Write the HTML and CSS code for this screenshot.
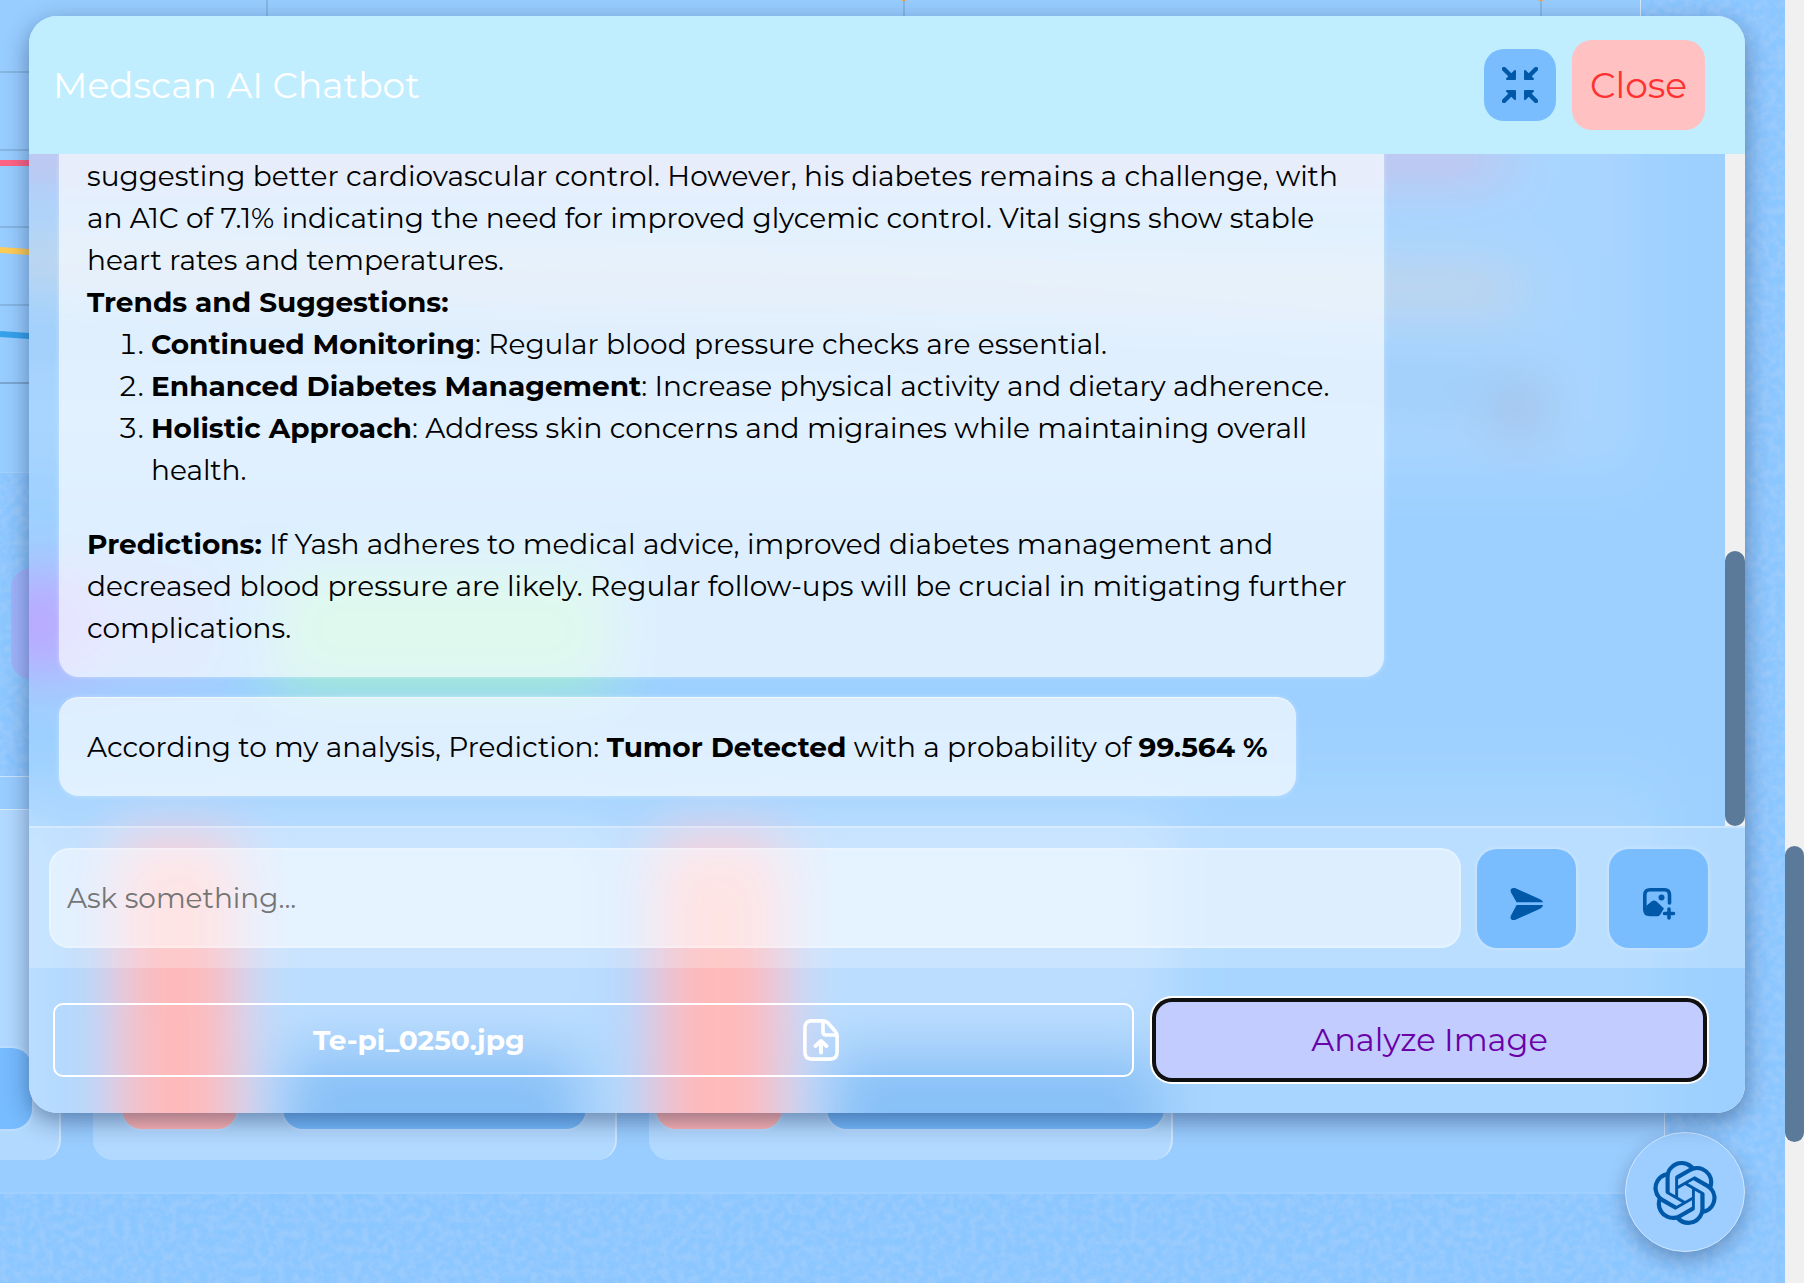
FILE: index.html
```html
<!DOCTYPE html>
<html lang="en">
<head>
    <meta charset="UTF-8">
    <meta name="viewport" content="width=device-width, initial-scale=1.0">
    <title>Medscan AI Chatbot</title>
    <link rel="stylesheet" href="styles.css">
</head>
<body>
    <svg class="grain" width="1785" height="1283">
        <filter id="noise" x="0" y="0" width="100%" height="100%">
            <feTurbulence type="fractalNoise" baseFrequency="0.13" numOctaves="3" seed="4"/>
            <feColorMatrix values="0 0 0 0 0.47  0 0 0 0 0.66  0 0 0 0 0.97  2.4 0 0 0 -0.8"/>
        </filter>
        <rect width="1785" height="1283" filter="url(#noise)"/>
    </svg>

    <!-- Dashboard behind the chat window -->
    <div class="page">
        <div class="chart-card">
            <svg width="1640" height="472" fill="none">
                <g stroke="#87b6e2" stroke-width="2">
                    <path d="M0 72H1540M0 150H1540M0 227H1540M0 305H1540M267 0V382M904 0V382M1541 0V382"/>
                    <path d="M0 383H1540" stroke="#7ba6cf"/>
                </g>
                <g stroke-width="6">
                    <path d="M0 163H60L1540 160" stroke="#ff6384"/>
                    <path d="M0 250L29 252L267 268L1540 295" stroke="#ffcd56"/>
                    <path d="M0 334L29 336L903 350L1540 415" stroke="#36a2eb"/>
                </g>
                <circle cx="904" cy="-4" r="5" fill="#ff9f40"/>
                <circle cx="1541" cy="-4" r="5" fill="#ff9f40"/>
            </svg>
        </div>
        <div class="actions">
            <div class="action purple"></div>
            <div class="action green"></div>
        </div>
        <div class="records">
            <div class="record"><span class="pill blue"></span></div>
            <div class="record">
                <span class="pill red"></span>
                <span class="pill blue"></span>
            </div>
            <div class="record third">
                <span class="pill red"></span>
                <span class="pill blue"></span>
            </div>
        </div>
    </div>

    <div class="page-scroll"><div class="page-thumb"></div></div>

    <!-- Chat window -->
    <div class="chatbot">
        <!-- frosted view of the dashboard -->
        <svg class="chat-glass" viewBox="29 16 1716 1097">
            <filter id="frost" filterUnits="userSpaceOnUse" x="-200" y="-200" width="2200" height="1600">
                <feGaussianBlur stdDeviation="28"/>
            </filter>
            <g filter="url(#frost)" fill="none">
                <rect x="-200" y="-200" width="2200" height="1600" fill="#8fcaff"/>
                <rect x="-200" y="-200" width="1840" height="673" fill="#9ccfff"/>
                <path d="M-200 158H1500" stroke="#ff6384" stroke-width="12"/>
                <path d="M-200 250L267 268L1520 290" stroke="#ffcd56" stroke-width="10"/>
                <path d="M-200 334L903 350L1540 395" stroke="#6fb4e8" stroke-width="12"/>
                <circle cx="1520" cy="412" r="18" fill="#a08fb0"/>
                <rect x="-200" y="572" width="300" height="104" fill="#b09eff"/>
                <rect x="90" y="568" width="120" height="111" fill="#a4bcff"/>
                <rect x="276" y="568" width="335" height="122" rx="20" fill="#93ebc4"/>
                <rect x="-200" y="776" width="1864" height="700" fill="#9acfff"/>
                <rect x="-200" y="809" width="261" height="600" fill="#b2d9ff"/>
                <rect x="93" y="809" width="524" height="600" fill="#b2d9ff"/>
                <rect x="649" y="809" width="524" height="600" fill="#b2d9ff"/>
                <rect x="118" y="842" width="119" height="600" rx="20" fill="#ffafaf"/>
                <rect x="656" y="842" width="126" height="600" rx="20" fill="#ffafaf"/>
                <rect x="283" y="1049" width="302" height="400" rx="20" fill="#76b8f6"/>
                <rect x="828" y="1049" width="336" height="400" rx="20" fill="#76b8f6"/>
            </g>
        </svg>

        <div class="chat-header">
            <h1>Medscan AI Chatbot</h1>
            <button class="resize-btn">
                <svg width="36" height="36" viewBox="0 0 36 36" fill="#0058a8" stroke="#0058a8" stroke-width="4.4" stroke-linecap="round" stroke-linejoin="round">
                    <path d="M2 2L9 9"/><path stroke-width="2" d="M13 4V12H5Z"/>
                    <path d="M34 2L27 9"/><path stroke-width="2" d="M23 4V12H31Z"/>
                    <path d="M2 34L9 27"/><path stroke-width="2" d="M13 32V24H5Z"/>
                    <path d="M34 34L27 27"/><path stroke-width="2" d="M23 32V24H31Z"/>
                </svg>
            </button>
            <button class="close-btn">Close</button>
        </div>

        <div class="chat-body">
            <div class="messages">
                <div class="message">
                    <p>suggesting better cardiovascular control. However, his diabetes remains a challenge, with an A1C of 7.1% indicating the need for improved glycemic control. Vital signs show stable heart rates and temperatures.</p>
                    <p><b>Trends and Suggestions:</b></p>
                    <ol>
                        <li><b>Continued Monitoring</b>: Regular blood pressure checks are essential.</li>
                        <li><b>Enhanced Diabetes Management</b>: Increase physical activity and dietary adherence.</li>
                        <li><b>Holistic Approach</b>: Address skin concerns and migraines while maintaining overall health.</li>
                    </ol>
                    <p><b>Predictions:</b> If Yash adheres to medical advice, improved diabetes management and decreased blood pressure are likely. Regular follow-ups will be crucial in mitigating further complications.</p>
                </div>
                <div class="message short">
                    <p>According to my analysis, Prediction: <b>Tumor Detected</b> with a probability of <b>99.564 %</b></p>
                </div>
            </div>
            <div class="chat-scroll"><div class="chat-thumb"></div></div>
        </div>

        <div class="chat-input">
            <input type="text" placeholder="Ask something...">
            <button class="send-btn">
                <svg width="34" height="34" viewBox="0 0 34 34" fill="#0058a8">
                    <path d="M1 5.5C-.4 2 2 0 5.5 1.3L30 12.3Q33 13.6 33 15.2H6.6Z"/>
                    <path d="M1 28.5C-.4 32 2 34 5.5 32.7L30 21.7Q33 20.3 33 18H6.6Z"/>
                </svg>
            </button>
            <button class="image-btn">
                <svg width="34" height="34" viewBox="0 0 34 34" fill="none" stroke="#0058a8" stroke-width="3.6" stroke-linecap="round">
                    <path d="M27.5 16V8Q27.5 2.8 22.5 2.8H8Q2.8 2.8 2.8 8V22.5Q2.8 27.5 8 27.5H16"/>
                    <path d="M4 19L9.5 14.5Q12 12.5 14.5 14.5L22 21.5L18 28H8Q3 28 3 23Z" fill="#0058a8" stroke="none"/>
                    <circle cx="19.5" cy="10.5" r="3" fill="#0058a8" stroke="none"/>
                    <path d="M27 22V31M22.5 26.5H31.5"/>
                </svg>
            </button>
        </div>

        <div class="chat-upload">
            <label class="file-box">
                <span class="file-name">Te-pi_0250.jpg</span>
                <svg width="36" height="42" viewBox="0 0 36 42" fill="none" stroke="#fff" stroke-width="3.6" stroke-linecap="round" stroke-linejoin="round">
                    <path d="M9 1.9H20Q23 1.9 25 4L32 12Q34.1 14.5 34.1 17V33Q34.1 40.1 27 40.1H9Q1.9 40.1 1.9 33V9Q1.9 1.9 9 1.9Z"/>
                    <path d="M20 2.5V13Q20 16 23 16H33.5"/>
                    <path d="M18 33.5V23M12.5 27L18 22L23.5 27" stroke-width="4"/>
                </svg>
            </label>
            <button class="analyze-btn">Analyze Image</button>
        </div>
    </div>

    <button class="chat-toggle">
        <svg width="64" height="64" viewBox="0 0 24 24" fill="#0058a8">
            <path d="M22.2819 9.8211a5.9847 5.9847 0 0 0-.5157-4.9108 6.0462 6.0462 0 0 0-6.5098-2.9A6.0651 6.0651 0 0 0 4.9807 4.1818a5.9847 5.9847 0 0 0-3.9977 2.9 6.0462 6.0462 0 0 0 .7427 7.0966 5.98 5.98 0 0 0 .511 4.9107 6.051 6.051 0 0 0 6.5146 2.9001A5.9847 5.9847 0 0 0 13.2599 24a6.0557 6.0557 0 0 0 5.7718-4.2058 5.9894 5.9894 0 0 0 3.9977-2.9001 6.0557 6.0557 0 0 0-.7475-7.0729zm-9.022 12.6081a4.4755 4.4755 0 0 1-2.8764-1.0408l.1419-.0804 4.7783-2.7582a.7948.7948 0 0 0 .3927-.6813v-6.7369l2.02 1.1686a.071.071 0 0 1 .038.052v5.5826a4.504 4.504 0 0 1-4.4945 4.4944zm-9.6607-4.1254a4.4708 4.4708 0 0 1-.5346-3.0137l.142.0852 4.783 2.7582a.7712.7712 0 0 0 .7806 0l5.8428-3.3685v2.3324a.0804.0804 0 0 1-.0332.0615L9.74 19.9502a4.4992 4.4992 0 0 1-6.1408-1.6464zM2.3408 7.8956a4.485 4.485 0 0 1 2.3655-1.9728V11.6a.7664.7664 0 0 0 .3879.6765l5.8144 3.3543-2.0201 1.1685a.0757.0757 0 0 1-.071 0l-4.8303-2.7865A4.504 4.504 0 0 1 2.3408 7.872zm16.5963 3.8558L13.1038 8.364 15.1192 7.2a.0757.0757 0 0 1 .071 0l4.8303 2.7913a4.4944 4.4944 0 0 1-.6765 8.1042v-5.6772a.79.79 0 0 0-.407-.667zm2.0107-3.0231l-.142-.0852-4.7735-2.7818a.7759.7759 0 0 0-.7854 0L9.409 9.2297V6.8974a.0662.0662 0 0 1 .0284-.0615l4.8303-2.7866a4.4992 4.4992 0 0 1 6.6802 4.66zM8.3065 12.863l-2.02-1.1638a.0804.0804 0 0 1-.038-.0567V6.0742a4.4992 4.4992 0 0 1 7.3757-3.4537l-.142.0805L8.704 5.459a.7948.7948 0 0 0-.3927.6813zm1.0976-2.3654l2.602-1.4998 2.6069 1.4998v2.9994l-2.5974 1.4997-2.6067-1.4997Z"/>
        </svg>
    </button>
</body>
</html>
```
FILE: styles.css
```css
* {
    box-sizing: border-box;
}
body {
    margin: 0;
    height: 1283px;
    overflow: hidden;
    position: relative;
    font-family: Montserrat, Inter, sans-serif;
    font-size: 28px;
    background-color: #8ac6ff;
}
button {
    border: none;
    padding: 0;
    font-family: inherit;
    border-radius: 20px;
    background-color: #79bdff;
    display: flex;
    align-items: center;
    justify-content: center;
}
.grain {
    position: absolute;
    left: 0;
    top: 0;
    opacity: 0.38;
}

/* Dashboard */
.page {
    position: relative;
    width: 1785px;
    height: 1283px;
    overflow: hidden;
}
.chart-card {
    width: 1641px;
    height: 473px;
    background-color: #98cdff;
    border-right: 1px solid #d4eaff;
    border-bottom: 1px solid #a4d2ff;
}
.chart-card svg {
    display: block;
}
.actions {
    display: flex;
    gap: 65px;
    margin: 95px 0 97px 11px;
}
.action {
    height: 111px;
    border-radius: 20px;
}
.action.purple {
    width: 200px;
    background-color: #a0b4fc;
}
.action.green {
    width: 335px;
    background-color: #93ebc4;
}
.records {
    display: flex;
    gap: 32px;
    width: 1665px;
    height: 418px;
    padding: 32px 0;
    background-color: #9acdff;
    border-top: 1px solid #cde6ff;
    border-right: 1px solid #cde6ff;
    border-bottom: 2px solid #a0d0ff;
}
.record {
    display: flex;
    align-items: flex-end;
    justify-content: space-between;
    width: 524px;
    padding: 0 29px 31px 29px;
    border-top: 1px solid #d8ecff;
    border-right: 2px solid #d0e8ff;
    border-radius: 0 0 20px 20px;
    background-color: #b2d9ff;
}
.record:first-child {
    width: 61px;
    padding: 0;
    padding-bottom: 31px;
    border-bottom-left-radius: 0;
}
.record.third {
    padding: 0 7px 31px 7px;
}
.pill {
    height: 81px;
    border-radius: 20px;
    box-shadow: 0 0 4px rgba(255, 255, 255, 0.4);
}
.pill.blue {
    width: 303px;
    background-color: #76bcff;
}
.record:first-child .pill {
    width: 32px;
    border-radius: 0 20px 20px 0;
}
.pill.red {
    width: 115px;
    height: 276px;
    background-color: #ffb4b4;
}
.third .pill.red {
    width: 126px;
}
.third .pill.blue {
    width: 337px;
}

/* Scrollbars */
.page-scroll {
    position: absolute;
    top: 0;
    right: 0;
    width: 19px;
    height: 1283px;
    padding-top: 846px;
    background-color: #f0f0f0;
}
.page-thumb {
    height: 296px;
    border-radius: 10px;
    background-color: #5b7a99;
}
.chat-scroll {
    width: 20px;
    padding-top: 397px;
    background-color: #f0f0f0;
}
.chat-thumb {
    height: 275px;
    border-radius: 10px;
    background-color: #5b7a99;
}

/* Chat window */
.chatbot {
    position: absolute;
    z-index: 1;
    left: 29px;
    top: 16px;
    width: 1716px;
    height: 1097px;
    display: flex;
    flex-direction: column;
    overflow: hidden;
    border-radius: 28px;
    box-shadow: 0 8px 24px rgba(0, 20, 60, 0.42);
}
.chat-glass {
    position: absolute;
    z-index: -1;
    left: 0;
    top: 0;
    width: 1716px;
    height: 1097px;
    opacity: 0.87;
}
.chatbot {
    background-color: #fff;
}
.chat-header {
    display: flex;
    align-items: center;
    height: 138px;
    padding: 0 40px 0 24px;
    background-color: #c0eeff;
}
.chat-header h1 {
    flex: 1;
    margin: 0;
    font-size: 36px;
    font-weight: 400;
    color: #fff;
}
.resize-btn {
    width: 72px;
    height: 72px;
    margin-right: 16px;
}
.close-btn {
    width: 133px;
    height: 90px;
    font-size: 36px;
    font-weight: 400;
    color: #ff3030;
    background-color: #ffc1c1;
}
.chat-body {
    display: flex;
    height: 672px;
}
.messages {
    flex: 1;
    display: flex;
    flex-direction: column;
    align-items: flex-start;
    justify-content: flex-end;
    gap: 20px;
    height: 672px;
    padding: 0 0 30px 30px;
    overflow: hidden;
}
.message {
    flex-shrink: 0;
    width: 1325px;
    padding: 28px;
    line-height: 42px;
    border-radius: 20px;
    background-color: rgba(255, 255, 255, 0.66);
    box-shadow: inset 0 1px 1px rgba(255, 255, 255, 0.6), 0 0 5px rgba(255, 255, 255, 0.35);
}
.message:first-child {
    padding-top: 2px;
    border-radius: 0 0 20px 20px;
}
.message.short {
    width: 1237px;
    padding-top: 29px;
}
.message p {
    margin: 0;
}
.message ol {
    margin: 0 0 32px;
    padding-left: 64px;
}
.message b {
    font-weight: 700;
}

/* Input row */
.chat-input {
    display: flex;
    align-items: center;
    height: 142px;
    padding: 0 37px 0 20px;
    border-top: 2px solid rgba(255, 255, 255, 0.3);
    background-color: rgba(255, 255, 255, 0.22);
}
.chat-input input {
    width: 1412px;
    height: 100px;
    padding: 0 16px;
    border: 2px solid rgba(255, 255, 255, 0.25);
    border-radius: 20px;
    font-family: inherit;
    font-size: 28px;
    background-color: rgba(255, 255, 255, 0.5);
}
.chat-input input::placeholder {
    color: #757575;
}
.send-btn, .image-btn {
    width: 99px;
    height: 99px;
    margin-left: 16px;
    padding-top: 11px;
    box-shadow: 0 0 5px rgba(255, 255, 255, 0.4);
}
.image-btn {
    margin-left: 33px;
}

/* Upload row */
.chat-upload {
    display: flex;
    align-items: center;
    height: 145px;
    padding: 0 42px 2px 24px;
}
.file-box {
    display: flex;
    align-items: center;
    width: 1081px;
    height: 74px;
    border: 2px solid #fff;
    border-radius: 10px;
    color: #fff;
    font-weight: 700;
}
.file-name {
    width: 490px;
    padding-left: 258px;
    margin-right: 258px;
    white-space: nowrap;
}
.analyze-btn {
    width: 547px;
    height: 76px;
    margin-left: 22px;
    border-radius: 16px;
    font-size: 32px;
    font-weight: 400;
    color: #6a00a8;
    background-color: #c3ccff;
    box-shadow: 0 0 0 4px #101010, 0 0 0 6px #fff;
}

.chat-toggle {
    position: absolute;
    left: 1625px;
    top: 1132px;
    width: 120px;
    height: 120px;
    padding-top: 2px;
    border: 1px solid #cfe7ff;
    border-radius: 50%;
    background-color: #9dceff;
    box-shadow: 0 8px 20px rgba(0, 20, 60, 0.3);
}
```
